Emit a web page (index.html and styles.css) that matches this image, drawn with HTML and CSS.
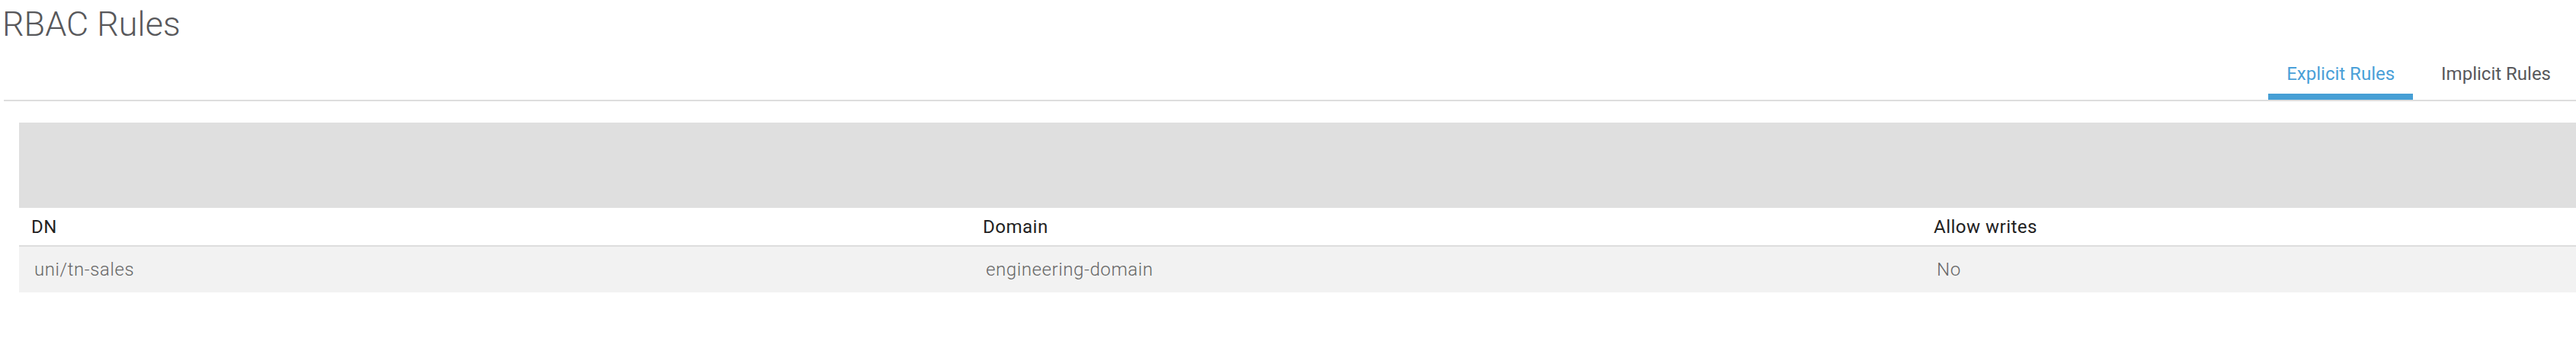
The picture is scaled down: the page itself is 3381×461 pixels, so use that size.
FILE: index.html
```html
<!DOCTYPE html>
<html lang="en">
<head>
<meta charset="utf-8">
<title>RBAC Rules</title>
<link rel="stylesheet" href="styles.css">
</head>
<body>
<div class="page">
  <h1 class="title">RBAC Rules</h1>
  <nav class="tabs">
    <a class="tab tab-active">Explicit Rules</a>
    <a class="tab">Implicit Rules</a>
  </nav>
  <div class="table-wrap">
    <div class="toolbar"></div>
    <table class="grid">
      <colgroup>
        <col class="col-a">
        <col class="col-b">
        <col class="col-c">
      </colgroup>
      <thead>
        <tr>
          <th>DN</th>
          <th>Domain</th>
          <th>Allow writes</th>
        </tr>
      </thead>
      <tbody>
        <tr>
          <td>uni/tn-sales</td>
          <td>engineering-domain</td>
          <td>No</td>
        </tr>
      </tbody>
    </table>
  </div>
</div>
</body>
</html>
```

FILE: styles.css
```css
html, body {
  margin: 0;
  padding: 0;
  overflow: hidden;
  background: #ffffff;
}

body {
  font-family: Roboto, "Liberation Sans", Arial, sans-serif;
  color: #58585b;
}

.page {
  width: 3381px;
}

.title {
  margin: 6px 0 0 3px;
  font-size: 45px;
  line-height: 52px;
  font-weight: 300;
  color: #58585b;
}

.tabs {
  display: flex;
  justify-content: flex-end;
  gap: 13px;
  margin: 25px 0 0 5px;
  padding-right: 9px;
  border-bottom: 2px solid #dddddd;
}

.tab {
  padding: 0 24px 12px;
  font-size: 24px;
  line-height: 28px;
  color: #58585b;
  border-bottom: 8px solid transparent;
  cursor: pointer;
}

.tab-active {
  color: #4aa0d8;
  border-bottom-color: #469fd5;
}

.table-wrap {
  margin: 28px 0 0 25px;
}

.toolbar {
  height: 112px;
  background: #dfdfdf;
}

.grid {
  width: 100%;
  table-layout: fixed;
  border-collapse: collapse;
}

.col-a { width: 1249px; }
.col-b { width: 1248px; }
.col-c { width: auto; }

.grid th {
  height: 49px;
  padding: 0 0 0 16px;
  text-align: left;
  font-size: 24px;
  font-weight: 400;
  letter-spacing: 0.5px;
  color: #222222;
  border-bottom: 2px solid #dddddd;
}

.grid td {
  height: 60px;
  padding: 0 0 0 20px;
  font-size: 24px;
  font-weight: 300;
  letter-spacing: 0.6px;
  color: #666666;
  background: #f2f2f2;
}
```
